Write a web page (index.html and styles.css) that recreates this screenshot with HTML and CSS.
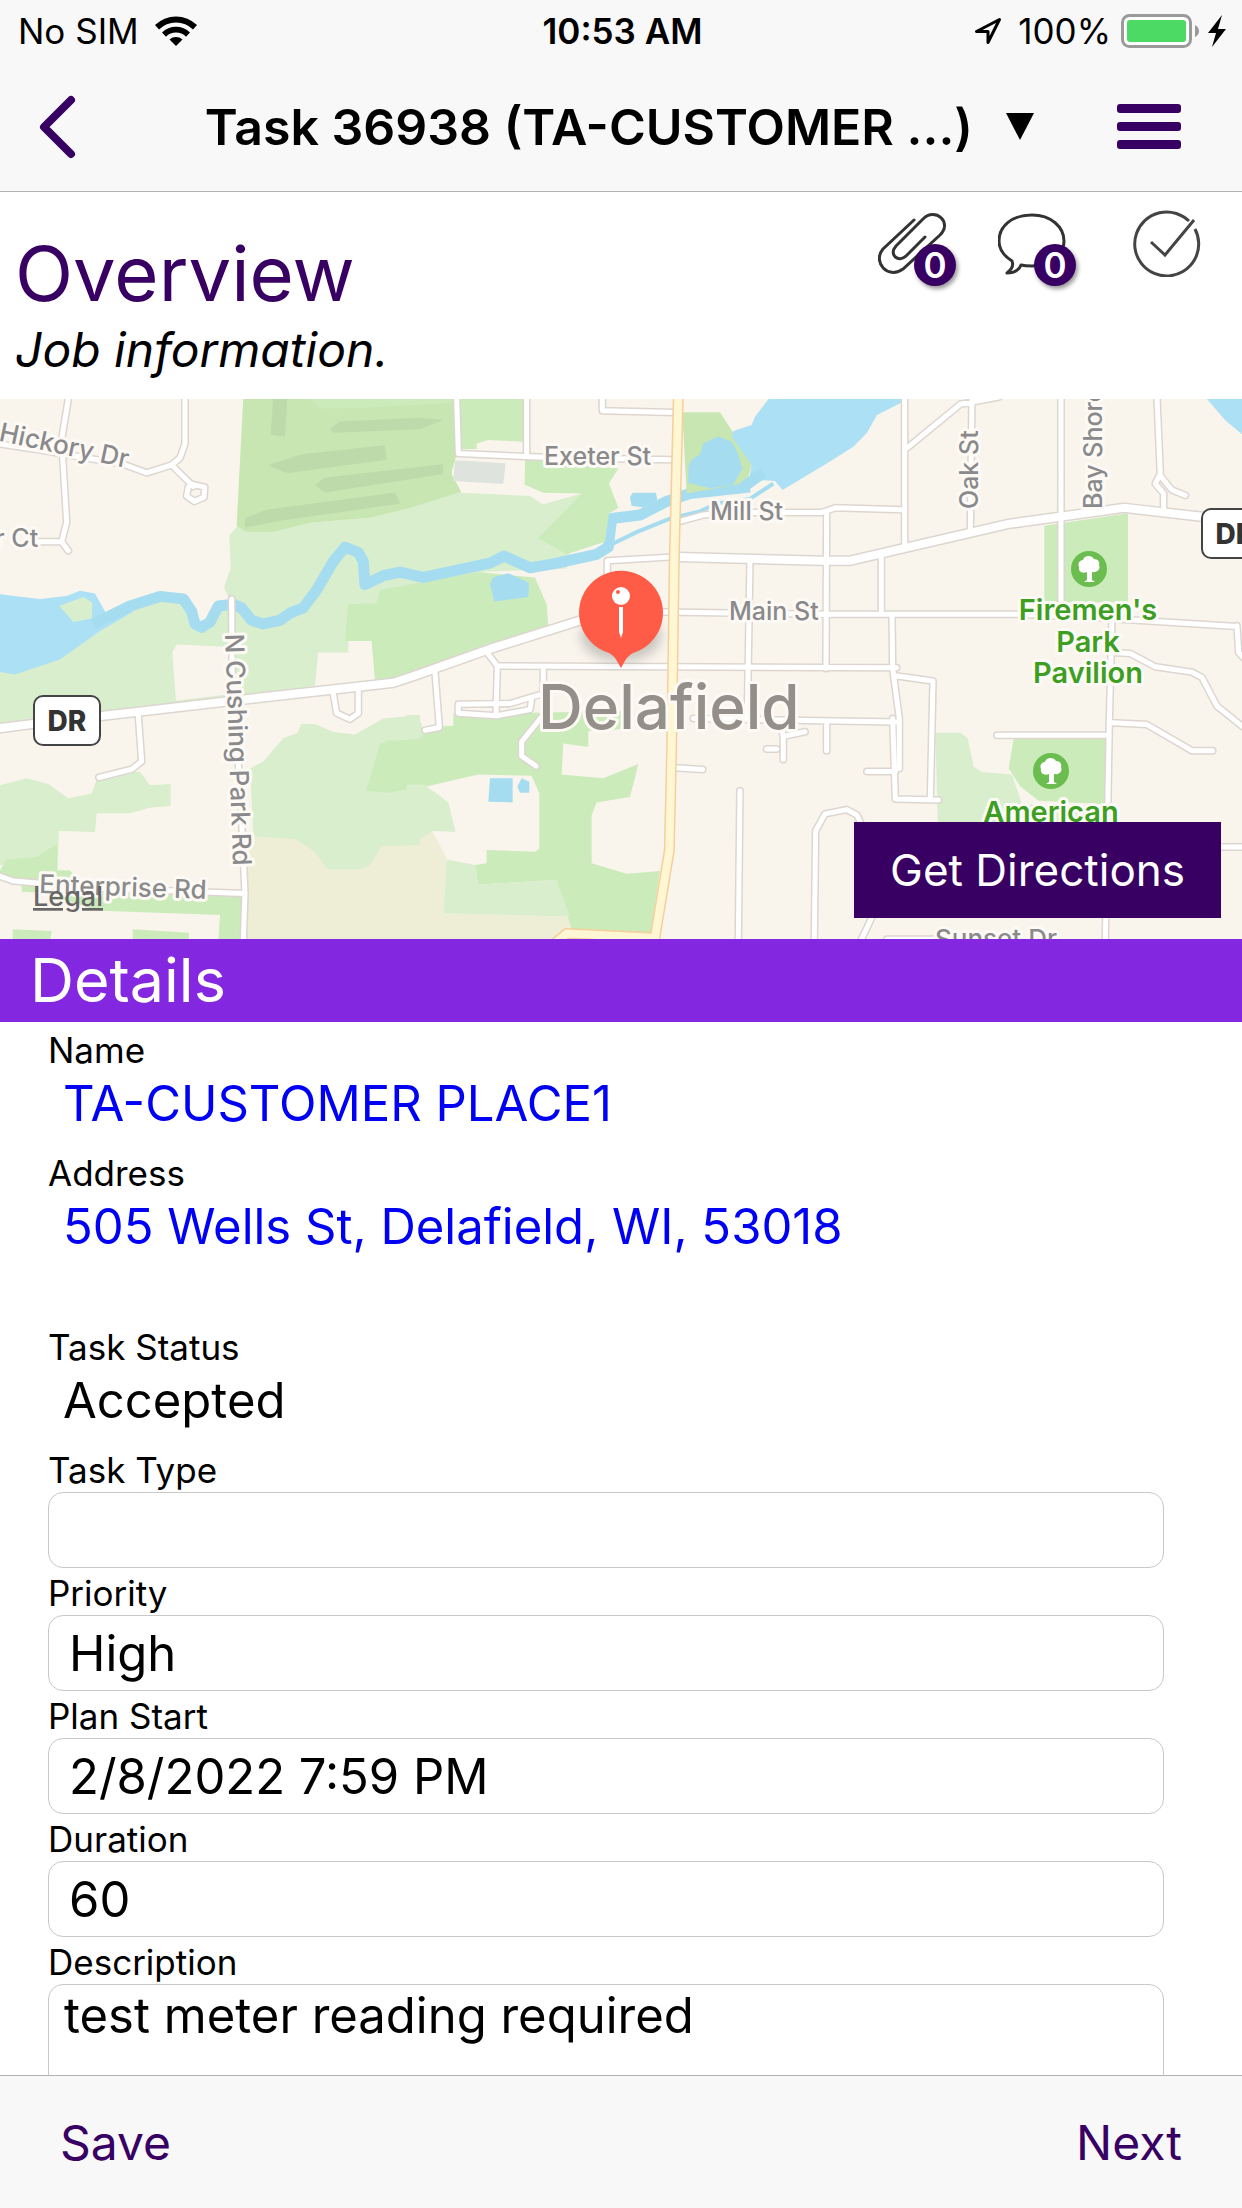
FILE: index.html
```html
<!DOCTYPE html>
<html lang="en">
<head>
<meta charset="utf-8">
<meta name="viewport" content="width=device-width, initial-scale=1">
<title>Task 36938</title>
<link rel="stylesheet" href="styles.css">
</head>
<body class="app">
<header class="topbar">
  <div class="status">
    <div class="status-left">
      <span>No SIM</span>
      <svg width="42" height="30" viewBox="0 0 42 30" aria-hidden="true">
        <path d="M0 9a30 30 0 0 1 42 0l-4 4.500a24 24 0 0 0-34 0z"/>
        <path d="M7 16.500a20 20 0 0 1 28 0l-4 4.300a14 14 0 0 0-20 0z"/>
        <path d="M14.500 23.500a10 10 0 0 1 13 0L21 30z"/>
      </svg>
    </div>
    <span class="status-time">10:53 AM</span>
    <div class="status-right">
      <svg width="28" height="28" viewBox="0 0 28 28" aria-hidden="true"><path d="M25.500 2.500 2.500 14.500H14V25.500z" fill="none" stroke="#000" stroke-width="3" stroke-linejoin="round"/></svg>
      <span class="percent">100%</span>
      <svg width="106" height="34" viewBox="0 0 106 34" aria-hidden="true">
        <rect x="1.500" y="1.500" width="68" height="31" rx="7" fill="#fff" stroke="#9a9a9a" stroke-width="3"/>
        <rect x="6" y="6" width="59" height="22" rx="3" fill="#4cd964"/>
        <path d="M74 11q4 2 4 6t-4 6z" fill="#9a9a9a"/>
        <path d="M101 1 87 19h8l-4 14 14-18h-8z"/>
      </svg>
    </div>
  </div>
  <nav class="nav">
    <button class="icon-btn" aria-label="Back"><svg width="38" height="64" viewBox="0 0 38 64"><path d="M33 5 6 32l27 27" fill="none" stroke="#380062" stroke-width="8" stroke-linecap="round" stroke-linejoin="round"/></svg></button>
    <button class="nav-title"><span>Task 36938 (TA-CUSTOMER ...)</span><svg width="30" height="28" viewBox="0 0 30 28" aria-hidden="true"><path d="M1 0h28L15 27z"/></svg></button>
    <button class="icon-btn" aria-label="Menu"><svg width="64" height="46" viewBox="0 0 64 46" fill="#380062"><rect width="64" height="9" rx="3"/><rect y="18" width="64" height="9" rx="3"/><rect y="36" width="64" height="9" rx="3"/></svg></button>
  </nav>
</header>

<main class="content">
  <section class="overview">
    <div>
      <h1 class="overview-title">Overview</h1>
      <p class="overview-sub">Job information.</p>
    </div>
    <div class="tools">
      <button class="tool" aria-label="Attachments">
        <svg width="68" height="62" viewBox="0 0 68 62"><path d="M36 7 5 36C-6 49 10 67 25 56L62 22C75 9 57-6 45 6L18 33c-8 9 3 17 10 10L47 24" fill="none" stroke="#333" stroke-width="3" stroke-linecap="round"/></svg>
        <span class="badge">0</span>
      </button>
      <button class="tool" aria-label="Comments">
        <svg width="68" height="62" viewBox="0 0 68 62"><path d="M34 2C14 2 1 13 1 28c0 9 5 15 13 20 2 5-1 9-5 12 7 0 12-3 14-8 4 1 8 1 11 1 19 0 32-11 32-25S53 2 34 2z" fill="none" stroke="#333" stroke-width="3" stroke-linejoin="round"/></svg>
        <span class="badge">0</span>
      </button>
      <button class="tool tool-wide" aria-label="Complete">
        <svg width="88" height="68" viewBox="0 0 88 68"><path d="M71 12A32 32 0 1 0 77 20M33 33l14 13 29-35" fill="none" stroke="#444" stroke-width="3"/></svg>
      </button>
    </div>
  </section>

  <section class="map" aria-label="Map of Delafield">
    <svg class="map-art" viewBox="0 0 1242 540" preserveAspectRatio="xMidYMid slice">
      <defs>
        <g id="streets">
          <g transform="translate(0 -9) scale(.3333 .3571)">
            <path d="M205 25 190 110 185 140 200 370 185 425 205 450M185 425H110M555 25V150L540 190 515 210 440 232 370 208M-10 150 100 165 370 208M515 210 580 270M575 264 614 272 612 300 583 312 560 297 565 272zM695 585 697 860 720 1100 735 1410 730 1545M415 912 425 1040 395 1062 297 1085M1000 850 1010 905 1050 922 1075 905V840M-5 1360 40 1375 300 1395 735 1410"/>
          </g>
          <g transform="translate(410 -9) scale(.3333 .3571)">
            <path d="M140 20 145 178 400 188 780 195M350 20V185M577 20V58L795 63M592 520V478L780 468M810 368 880 350 930 345M930 343H1236L1276 330 1481 335M760 622 1260 628M235 740 262 773 1460 778M262 775 258 910M400 780V850L300 878 145 880V905L260 912 360 895 365 865M75 790 88 945 45 953M395 915 335 985V1025L378 1053M1020 480 1012 920M1250 345 1248 780M850 920 1460 930M1250 930V1010M1115 950 1120 970V1035M1120 970 1185 957M1070 1005H1100M795 1058 878 1063M990 1122 985 1545M1213 1545 1217 1235 1245 1187 1310 1175 1341 1190 1366 1240"/>
          </g>
          <g transform="translate(822 -9) scale(.3333 .3571)">
            <path d="M248 20V440M252 165 415 40 530 20M450 20 445 400M717 20V600M1005 20 1015 235 1000 262 1025 290V335M1015 240 1050 280 1090 295M0 628H590L860 640 1245 662M1245 660 1250 735 1270 755M178 470V625M210 630 212 780 232 920V1060M220 800 333 815 325 1145M212 920 220 1145 350 1148M135 1068H220M870 640 862 930 850 1545M875 735 925 738 1000 775 1110 790 1140 805 1185 885 1265 945M870 932 975 937 1110 1010H1172M525 967H855M1195 1280H1265M115 1545 148 1480M195 1538H500"/>
          </g>
        </g>
        <g id="avenues">
          <path transform="translate(0 -9) scale(.3333 .3571)" d="M-10 948 100 935 700 870 1180 820 1235 803 1470 725 1760 640"/>
          <path transform="translate(822 -9) scale(.3333 .3571)" d="M-430 468 0 478H85L560 375 905 330 1140 355 1265 370"/>
        </g>
        <g id="highway">
          <path transform="translate(410 -9) scale(.3333 .3571)" d="M805 20 793 470 785 1000 778 1290 733 1545M440 1545 470 1522 735 1534"/>
        </g>
        <g id="tree"><circle r="18" fill="#6bbd4f"/><path d="M-2 11V3c-5 2-9-1-8-5-2-5 2-7 4-7 1-5 9-5 11-1 4 0 6 3 5 6 2 4-2 8-7 7v8l3 2H-5z" fill="#fff"/></g>
      </defs>
      <rect width="1242" height="540" fill="#f9f5ed"/>

      <g transform="translate(0 -9) scale(.3333 .3571)">
        <path class="khaki" d="M735 1250 885 1240H1300L1340 1310 1330 1465 1710 1475 1715 1515 1670 1545H735z"/>
        <path class="wood" d="M713 380 688 408 692 500 672 552 690 590 650 610 605 670 570 600 480 585 320 640 0 600V945L700 870 945 828 955 735H1045V703H1115L1125 810 1230 560 1435 510 1700 500 1745 290 1630 320 1600 290 1385 285 1110 358 930 372z"/>
        <path class="land" d="M517 735 530 713 690 720V852L528 870z"/>
        <path class="grass" d="M1045 600 1130 597 1140 560 1435 510 1605 525 1640 600 1645 660 1465 720 1180 815 1125 810 1115 703H1035z"/>
        <path class="park" d="M730 20H1370V180L1355 230 1385 285 1230 330 1110 358 930 372 820 397H738L710 380z"/>
        <path class="strip" d="M820 20H862L855 130 812 125zM1020 88 1260 78 1330 84 1260 110 1000 120 990 108zM805 210 905 180 1155 155 1160 195 860 233zM945 265 975 245 1330 208V235L975 287zM735 360 800 335 1185 287 1200 318 850 365 735 385z"/>
        <path class="grass" d="M925 20 960 52 1100 50 1370 35V20z"/>
        <path class="wood" d="M0 1107 80 1087 145 1103 205 1143 275 1130 295 1080 420 1068 450 1107 512 1103V1165L450 1170 390 1185H290L285 1238 177 1235 172 1345 0 1330zM750 1060 790 1040 850 975 893 960 903 935H945L1000 958 1065 965 1150 920 1260 910V1275L1145 1278 1110 1330 1080 1343H985L940 1290 885 1258 760 1250z"/>
        <path class="grass" d="M172 1270 110 1308 20 1315 0 1345V1365L65 1380V1405L120 1407 300 1458 660 1470 655 1545H725V1415L630 1410 240 1380 210 1345H172zM38 1510 155 1515 150 1545H38zM398 1510 567 1520 565 1545H398zM1140 1000 1160 982 1260 978V1110L1165 1128 1098 1122z"/>
        <path class="lake" d="M0 572 120 585 200 577 240 562 285 570 318 625 390 600 400 620 300 675 180 755 45 797 0 790z"/>
        <path class="wood" d="M178 605 250 580 277 595 275 640 220 650z"/>
        <path class="river" d="M280 655 390 605 480 578 550 585 575 620 585 655 605 665 630 650 655 605 700 600 725 610 755 645 790 655 840 645 870 625 910 610 950 560 1000 480 1035 440 1075 455 1090 480 1095 545 1150 520 1200 510 1270 525 1470 485 1512 465 1590 498 1660 487 1790 460 1825 440 1835 360 1920 350 2000 312 2070 290 2250 272"/>
      </g>
      <g transform="translate(410 -9) scale(.3333 .3571)">
        <path class="grass" d="M150 20H340V145L235 140 200 150V165H150zM345 190 625 220 597 262 625 330 597 345 585 425 470 460 385 415 515 290 400 288 343 265z"/>
        <path class="land" d="M125 235 150 170 345 190 343 265 400 290 398 320 360 297 155 288z"/>
        <path d="M135 197 287 205 280 263 130 255z" fill="#dfe3de"/>
        <path class="grass" d="M130 908 665 898 630 950 535 955V1000L460 990 455 1077 580 1087 685 1047 660 1140 560 1155 545 1190V1325L650 1355 750 1347 720 1535 485 1510 440 1372 205 1385 195 1330 230 1325V1288L375 1293 388 1285V1130L365 1080 205 1077 110 1097 50 1110-60 1125-130 1122-90 990 30 975 35 945 130 940z"/>
        <path class="wood" d="M-10 910H25L45 965-10 978zM-10 1105H40L80 1130 115 1155 137 1238 70 1235-10 1278zM110 1315 195 1330 205 1385 440 1372 480 1475 100 1465z"/>
        <path class="park" d="M817 62H930L970 120 1025 210 1010 260 830 290z"/>
        <path class="lake" d="M1080 20 1035 75 1025 98 970 115 965 130 1025 210 1015 262 1060 253 1095 255 1118 280 1260 200 1331 158 1371 120 1401 70 1475 35V20z"/>
        <path class="water" d="M835 215 845 195 870 180 880 150 925 130 965 145 985 180 997 220 970 265 900 275 835 260zM240 545 248 525 295 513 357 540 355 580 253 592zM660 300 668 288H738L742 308 700 328 665 325zM240 1087H308V1155L235 1153zM322 1110 335 1087 358 1097V1128H330z"/>
        <path class="river" d="M1000 272 1060 232"/>
        <path class="river creek" d="M605 432 680 398 780 360 870 340 920 318 1020 305 1090 262"/>
      </g>
      <g transform="translate(822 -9) scale(.3333 .3571)">
        <path class="grass" d="M667 380 918 345V595H667z"/>
        <path class="wood" d="M340 960H415L437 975 455 1055 480 1070 570 1077 600 1160 850 1165V1230H348z"/>
        <path class="grass" d="M575 977H855L848 1160 650 1150 595 1110 560 1060z"/>
        <path class="lake" d="M1150 20 1210 85 1265 128V20z"/>
      </g>

      <use href="#streets" class="street-edge"/>
      <use href="#avenues" class="avenue-edge"/>
      <use href="#streets" class="street"/>
      <use href="#avenues" class="avenue"/>
      <use href="#highway" class="highway-edge"/>
      <use href="#highway" class="highway"/>

      <g class="label">
        <text class="road-long" x="-2" y="42" transform="rotate(12 0 42)">Hickory Dr</text>
        <text x="-5" y="148">r Ct</text>
        <text x="544" y="66">Exeter St</text>
        <text x="710" y="121">Mill St</text>
        <text x="729" y="221">Main St</text>
        <text class="road-long" x="39" y="494" transform="rotate(2 39 494)">Enterprise Rd</text>
        <text class="road-long" transform="translate(225 235) rotate(88)">N Cushing Park Rd</text>
        <text transform="translate(978 110) rotate(-90)">Oak St</text>
        <text transform="translate(1102 110) rotate(-90)">Bay Shore</text>
        <text class="road-long" x="935" y="549">Sunset Dr</text>
      </g>
      <text class="town" x="538" y="330">Delafield</text>
      <g class="poi" text-anchor="middle">
        <text x="1088" y="221">Firemen's</text>
        <text x="1088" y="253">Park</text>
        <text x="1088" y="284">Pavilion</text>
        <text x="1051" y="423">American</text>
      </g>
      <use href="#tree" x="1089" y="170"/>
      <use href="#tree" x="1051" y="372"/>
      <g class="shield">
        <rect x="34" y="297" width="66" height="49" rx="9"/><text x="67" y="332">DR</text>
        <rect x="1202" y="110" width="66" height="49" rx="9"/><text x="1235" y="145">DR</text>
      </g>
      <text class="legal" x="33" y="507">Legal</text>
      <ellipse cx="621" cy="237" rx="40" ry="25" fill="#000" opacity=".2" class="pin-shadow"/>
      <path d="M621 269c-4-7-6-12-12-15a42 42 0 1 1 24 0c-6 3-8 8-12 15z" fill="#ff5c47"/>
      <circle cx="621" cy="197" r="9" fill="#fff"/><circle cx="618" cy="193" r="2" fill="#ff5c47"/>
      <path d="M619 208h4v25l-2 6-2-6z" fill="#fff"/>
    </svg>
    <button class="directions">Get Directions</button>
  </section>

  <h2 class="section-head">Details</h2>
  <form class="details" id="task">
    <div class="field"><span class="label-text">Name</span><a class="value" href="#customer">TA-CUSTOMER PLACE1</a></div>
    <div class="field field-last"><span class="label-text">Address</span><a class="value" href="#address">505 Wells St, Delafield, WI, 53018</a></div>
    <div class="field"><span class="label-text">Task Status</span><span class="value">Accepted</span></div>
    <div class="field"><label class="label-text" for="type">Task Type</label><input class="box" id="type" type="text"></div>
    <div class="field"><label class="label-text" for="priority">Priority</label><input class="box" id="priority" type="text" value="High"></div>
    <div class="field"><label class="label-text" for="start">Plan Start</label><input class="box" id="start" type="text" value="2/8/2022 7:59 PM"></div>
    <div class="field"><label class="label-text" for="duration">Duration</label><input class="box" id="duration" type="text" value="60"></div>
    <div class="field"><label class="label-text" for="description">Description</label><textarea class="box box-area" id="description" rows="4">test meter reading required</textarea></div>
  </form>
</main>

<footer class="bottombar">
  <button class="action" form="task">Save</button>
  <button class="action">Next</button>
</footer>
</body>
</html>
```
FILE: styles.css
```css
* { box-sizing: border-box; }
body, h1, h2, p { margin: 0; }
button { padding: 0; border: 0; background: none; font: inherit; color: inherit; }
svg { display: block; flex: none; }

.app {
  display: flex;
  flex-direction: column;
  height: 100vh;
  overflow: hidden;
  background: #fff;
  color: #000;
  font-family: Inter, "Liberation Sans", sans-serif;
  font-size: 49px;
}

.topbar { flex: none; background: #f8f8f8; border-bottom: 1px solid #b2b2b2; }
.status {
  display: grid;
  grid-template-columns: 1fr auto 1fr;
  align-items: center;
  height: 62px;
  padding: 0 15px 0 18px;
  font-size: 35px;
}
.status-left { display: flex; align-items: center; gap: 16px; }
.status-time { font-weight: 600; }
.status-right { display: flex; align-items: center; justify-content: flex-end; gap: 10px; }
.percent { margin-left: 6px; }

.nav {
  display: flex;
  align-items: center;
  height: 129px;
  padding: 0 61px 0 38px;
}
.icon-btn { display: flex; }
.nav-title {
  display: flex;
  align-items: center;
  gap: 32px;
  margin: 0 82px 0 auto;
  font-size: 50px;
  font-weight: 600;
}

.content { flex: 1; min-height: 0; overflow: hidden; }
.overview {
  display: flex;
  justify-content: space-between;
  height: 207px;
  padding: 17px 36px 0 15px;
}
.overview-title { margin-top: 14px; font-size: 76px; font-weight: 400; line-height: 100px; color: #380062; }
.overview-sub { font-size: 48px; font-style: italic; line-height: 54px; }
.tools { display: flex; align-items: flex-start; gap: 40px; }
.tool { position: relative; width: 80px; padding-top: 4px; }
.tool-wide { width: 88px; padding-top: 0; }
.badge {
  position: absolute;
  top: 35px;
  right: 2px;
  width: 42px;
  height: 42px;
  border-radius: 50%;
  background: #380062;
  box-shadow: 2px 3px 4px rgba(0, 0, 0, .4);
  color: #fff;
  font-size: 35px;
  font-weight: 600;
  line-height: 42px;
  text-align: center;
}

.map { position: relative; height: 540px; overflow: hidden; }
.map-art { width: 100%; height: 100%; }
.map-art path { vector-effect: non-scaling-stroke; }
.land { fill: #f9f5ed; }
.khaki { fill: #eeeed7; }
.wood { fill: #d9eecd; }
.grass { fill: #cbebbb; }
.park { fill: #c7e6b2; }
.strip { fill: #bddaaa; }
.water { fill: #a6dcf0; }
.lake { fill: #ace0f4; }
.river { fill: none; stroke: #a6dcf0; stroke-width: 11px; stroke-linejoin: round; }
.creek { stroke-width: 4px; }
.street-edge, .street, .avenue-edge, .avenue, .highway-edge, .highway { fill: none; stroke-linecap: round; stroke-linejoin: round; }
.street-edge { stroke: #ddd6d0; stroke-width: 8px; }
.street { stroke: #fff; stroke-width: 5px; }
.avenue-edge { stroke: #ddd6d0; stroke-width: 11px; }
.avenue { stroke: #fff; stroke-width: 8px; }
.highway-edge { stroke: #f6cf9a; stroke-width: 11px; }
.highway { stroke: #fff6d3; stroke-width: 8px; }
.label, .town, .poi { stroke: #fdfaf5; stroke-width: 6px; stroke-linejoin: round; paint-order: stroke; }
.label { fill: #8a8a8c; font-size: 25px; font-weight: 500; }
.road-long { font-size: 26px; }
.town { fill: #949089; font-size: 62px; font-weight: 500; }
.poi { fill: #3c9e22; font-size: 29px; font-weight: 600; }
.shield rect { fill: #fff; stroke: #444; stroke-width: 2px; }
.shield text { fill: #333; font-size: 28px; font-weight: 800; text-anchor: middle; }
.legal { fill: #666; font-size: 27px; font-weight: 500; text-decoration: underline; }
.pin-shadow { filter: blur(6px); }
.directions {
  position: absolute;
  right: 21px;
  bottom: 21px;
  padding: 0 36px;
  background: #380062;
  color: #fff;
  font-size: 44px;
  line-height: 96px;
}

.section-head {
  padding-left: 30px;
  background: #8427e0;
  color: #fff;
  font-size: 61px;
  font-weight: 400;
  line-height: 83px;
}
.details { padding: 3px 78px 0 48px; }
.field { display: flex; flex-direction: column; height: 123px; }
.field-last { margin-bottom: 51px; }
.label-text { padding-top: 4px; font-size: 35px; line-height: 43px; }
.value { align-self: flex-start; padding-left: 15px; line-height: 63px; text-decoration: none; }
a.value { color: #0000f5; }
.box {
  width: 100%;
  height: 76px;
  padding: 0 20px;
  border: 1px solid #c8c8c8;
  border-radius: 15px;
  background: #fff;
  color: #000;
  font: inherit;
  flex: none;
}
.box-area { height: 252px; padding: 0 15px; line-height: 61px; resize: none; }

.bottombar {
  display: flex;
  flex: none;
  align-items: center;
  justify-content: space-between;
  height: 133px;
  padding: 0 60px;
  border-top: 1px solid #b2b2b2;
  background: #f8f8f9;
}
.action { font-size: 48px; color: #380062; }
```
